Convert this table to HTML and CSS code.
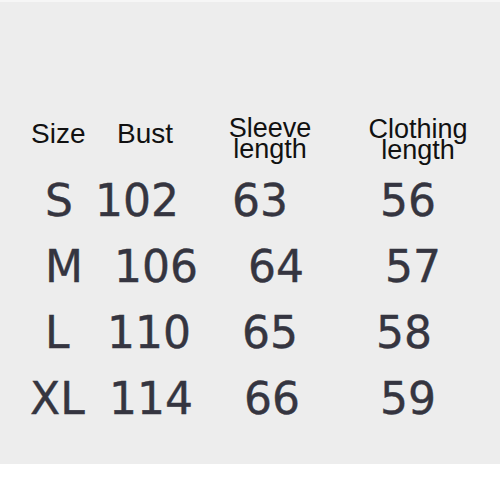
FILE: index.html
```html
<!DOCTYPE html>
<html>
<head>
<meta charset="utf-8">
<link rel="stylesheet" href="styles.css">
</head>
<body>
<div class="chart">
  <div class="head">
    <div class="h h-size">Size</div>
    <div class="h h-bust">Bust</div>
    <div class="h h-two">Sleeve<br>length</div>
    <div class="h h-two h-cloth">Clothing<br>length</div>
  </div>
  <div class="row">
    <span class="c">S</span><span class="c">102</span><span class="c">63</span><span class="c">56</span>
  </div>
  <div class="row">
    <span class="c">M</span><span class="c n106">106</span><span class="c n64">64</span><span class="c n57">57</span>
  </div>
  <div class="row">
    <span class="c">L</span><span class="c n110">110</span><span class="c n65">65</span><span class="c n58">58</span>
  </div>
  <div class="row">
    <span class="c xl">XL</span><span class="c n114">114</span><span class="c n66">66</span><span class="c">59</span>
  </div>
</div>
</body>
</html>
```
FILE: styles.css
```css
html, body {
  margin: 0;
  padding: 0;
  background: #ffffff;
}
.chart {
  box-sizing: border-box;
  height: 464px;
  background: #ededed;
  border-top: 2px solid #f6f6f6;
  padding-top: 116px;
}
.head {
  display: grid;
  grid-template-columns: 86px 86px 134px 162px;
  padding-left: 31px;
  height: 50px;
  font-family: "Liberation Sans", Arial, sans-serif;
  color: #111;
}
.h {
  font-size: 28px;
  line-height: 21px;
  padding-top: 5px;
}
.h-two {
  font-size: 27px;
  text-align: center;
  padding-top: 0;
}
.h-cloth {
  padding-top: 1px;
}
.row {
  display: grid;
  grid-template-columns: 50px 137px 148px 1fr;
  padding-left: 45px;
  height: 66px;
  font-family: "DejaVu Sans", sans-serif;
  font-size: 44px;
  line-height: 66px;
  color: #353540;
  -webkit-text-stroke: 0.4px #353540;
}
.c { white-space: nowrap; }
.xl { margin-left: -15px; }
.n106 { margin-left: 19px; }
.n110 { margin-left: 12px; }
.n114 { margin-left: 14px; }
.n64 { margin-left: 16px; }
.n65 { margin-left: 10px; }
.n66 { margin-left: 12px; }
.n57 { margin-left: 5px; }
.n58 { margin-left: -4px; }
```
